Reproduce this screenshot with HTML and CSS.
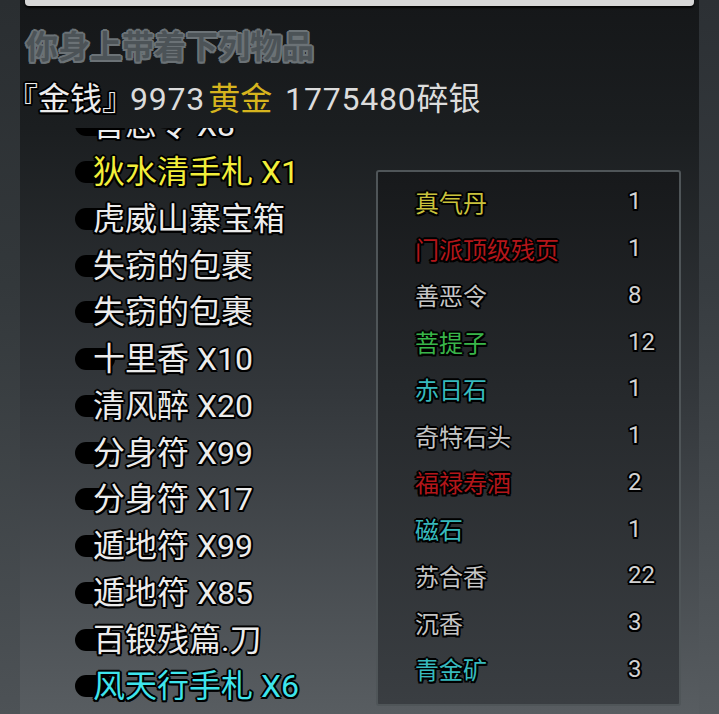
FILE: index.html
```html
<!DOCTYPE html>
<html lang="zh-CN">
<head>
<meta charset="utf-8">
<title>物品</title>
<link rel="stylesheet" href="styles.css">
</head>
<body>
<div class="strip strip-left"></div>
<main class="main">
  <div class="topbar"></div>
  <h1 class="title">你身上带着下列物品</h1>
  <p class="money"><span class="tag">『金钱』</span><span class="digits">9973</span><span class="gold">黄金</span> <span class="digits">1775480</span>碎银</p>
  <div class="content">
    <div class="list-view">
      <ul class="list">
        <li class="item">善恶令 X8</li>
        <li class="item yellow">狄水清手札 X1</li>
        <li class="item">虎威山寨宝箱</li>
        <li class="item">失窃的包裹</li>
        <li class="item">失窃的包裹</li>
        <li class="item">十里香 X10</li>
        <li class="item">清风醉 X20</li>
        <li class="item">分身符 X99</li>
        <li class="item">分身符 X17</li>
        <li class="item">遁地符 X99</li>
        <li class="item">遁地符 X85</li>
        <li class="item">百锻残篇.刀</li>
        <li class="item cyan">风天行手札 X6</li>
      </ul>
    </div>
    <div class="panel">
      <span class="name c-yellow">真气丹</span><span class="num">1</span>
      <span class="name c-red">门派顶级残页</span><span class="num">1</span>
      <span class="name c-grey">善恶令</span><span class="num">8</span>
      <span class="name c-green">菩提子</span><span class="num">12</span>
      <span class="name c-teal">赤日石</span><span class="num">1</span>
      <span class="name c-grey">奇特石头</span><span class="num">1</span>
      <span class="name c-red">福禄寿酒</span><span class="num">2</span>
      <span class="name c-teal">磁石</span><span class="num">1</span>
      <span class="name c-grey">苏合香</span><span class="num">22</span>
      <span class="name c-grey">沉香</span><span class="num">3</span>
      <span class="name c-teal">青金矿</span><span class="num">3</span>
    </div>
  </div>
</main>
<div class="strip strip-right"></div>
</body>
</html>
```
FILE: styles.css
```css
html, body {
  margin: 0;
  padding: 0;
}
body {
  width: 719px;
  height: 714px;
  overflow: hidden;
  display: flex;
  font-family: Roboto, "Noto Sans CJK SC", sans-serif;
  background: #3a3f43;
}
.strip {
  width: 20px;
  flex: none;
}
.strip-left {
  background: linear-gradient(180deg, #2a2e31 0%, #33383b 40%, #4d5256 100%);
}
.strip-right {
  background: linear-gradient(180deg, #2c3034 0%, #373c40 40%, #565b5f 100%);
}
.main {
  flex: 1;
  display: flex;
  flex-direction: column;
  min-width: 0;
  background: linear-gradient(180deg, #151719 0%, #1b1e20 18%, #33373b 55%, #585d61 100%);
}
.topbar {
  height: 6px;
  margin: 0 5px;
  background: #d6d6d6;
  border-radius: 0 0 4px 4px;
  box-shadow: 0 2px 2px rgba(0, 0, 0, 0.9);
  flex: none;
}
.title {
  margin: 21px 0 0 6px;
  font-size: 32px;
  line-height: 40px;
  font-weight: bold;
  color: #4c5357;
  white-space: nowrap;
  text-shadow:
    -2px 0 #6b7276, 2px 0 #6b7276, 0 -2px #6b7276, 0 2px #6b7276,
    -1.5px -1.5px #6b7276, 1.5px -1.5px #6b7276, -1.5px 1.5px #6b7276, 1.5px 1.5px #6b7276;
}
.money {
  margin: 12px 0 0 2px;
  font-size: 32px;
  line-height: 40px;
  color: #dcdcdc;
  white-space: nowrap;
}
.tag {
  color: #ececec;
  font-feature-settings: "halt";
  margin-right: 12px;
  text-shadow:
    -2px 0 #000, 2px 0 #000, 0 -2px #000, 0 2px #000,
    -1.5px -1.5px #000, 1.5px -1.5px #000, -1.5px 1.5px #000, 1.5px 1.5px #000;
}
.digits {
  letter-spacing: 0.8px;
}
.gold {
  color: #d6b41e;
  margin: 0 5px 0 3px;
}
.content {
  flex: 1;
  min-height: 0;
  margin-top: 9px;
  display: flex;
  align-items: flex-start;
}
.list-view {
  flex: 1;
  align-self: stretch;
  overflow: hidden;
  padding-left: 55px;
}
.list {
  list-style: none;
  margin: -29px 0 0 0;
  padding: 0;
}
.item {
  display: flex;
  align-items: center;
  height: 46.75px;
  font-size: 32px;
  color: #ececec;
  white-space: nowrap;
  text-shadow:
    -2px 0 #000, 2px 0 #000, 0 -2px #000, 0 2px #000,
    -1.5px -1.5px #000, 1.5px -1.5px #000, -1.5px 1.5px #000, 1.5px 1.5px #000;
}
.item::before {
  content: "";
  flex: none;
  width: 40px;
  height: 22px;
  margin-top: 6px;
  margin-right: -22px;
  border-radius: 11px;
  background: #000;
}
.item.yellow { color: #f2ee3a; }
.item.cyan { color: #3ee4ec; }
.panel {
  flex: none;
  width: 264px;
  margin: 42px 18px 0 0;
  border: 2px solid #4f5558;
  border-radius: 3px;
  padding: 6px 0 12px 37px;
  display: grid;
  grid-template-columns: 213px auto;
  grid-auto-rows: 46.75px;
  align-items: center;
  font-size: 24px;
  background: linear-gradient(180deg, #17191b 0%, #25282b 40%, #3a3e42 100%);
  text-shadow:
    -2px 0 #000, 2px 0 #000, 0 -2px #000, 0 2px #000,
    -1.5px -1.5px #000, 1.5px -1.5px #000, -1.5px 1.5px #000, 1.5px 1.5px #000;
}
.name { white-space: nowrap; }
.num { color: #d2d2d2; }
.c-yellow { color: #c9c23c; }
.c-red { color: #b3161a; }
.c-grey { color: #c4c4c4; }
.c-green { color: #39b54a; }
.c-teal { color: #37b9bd; }
```
